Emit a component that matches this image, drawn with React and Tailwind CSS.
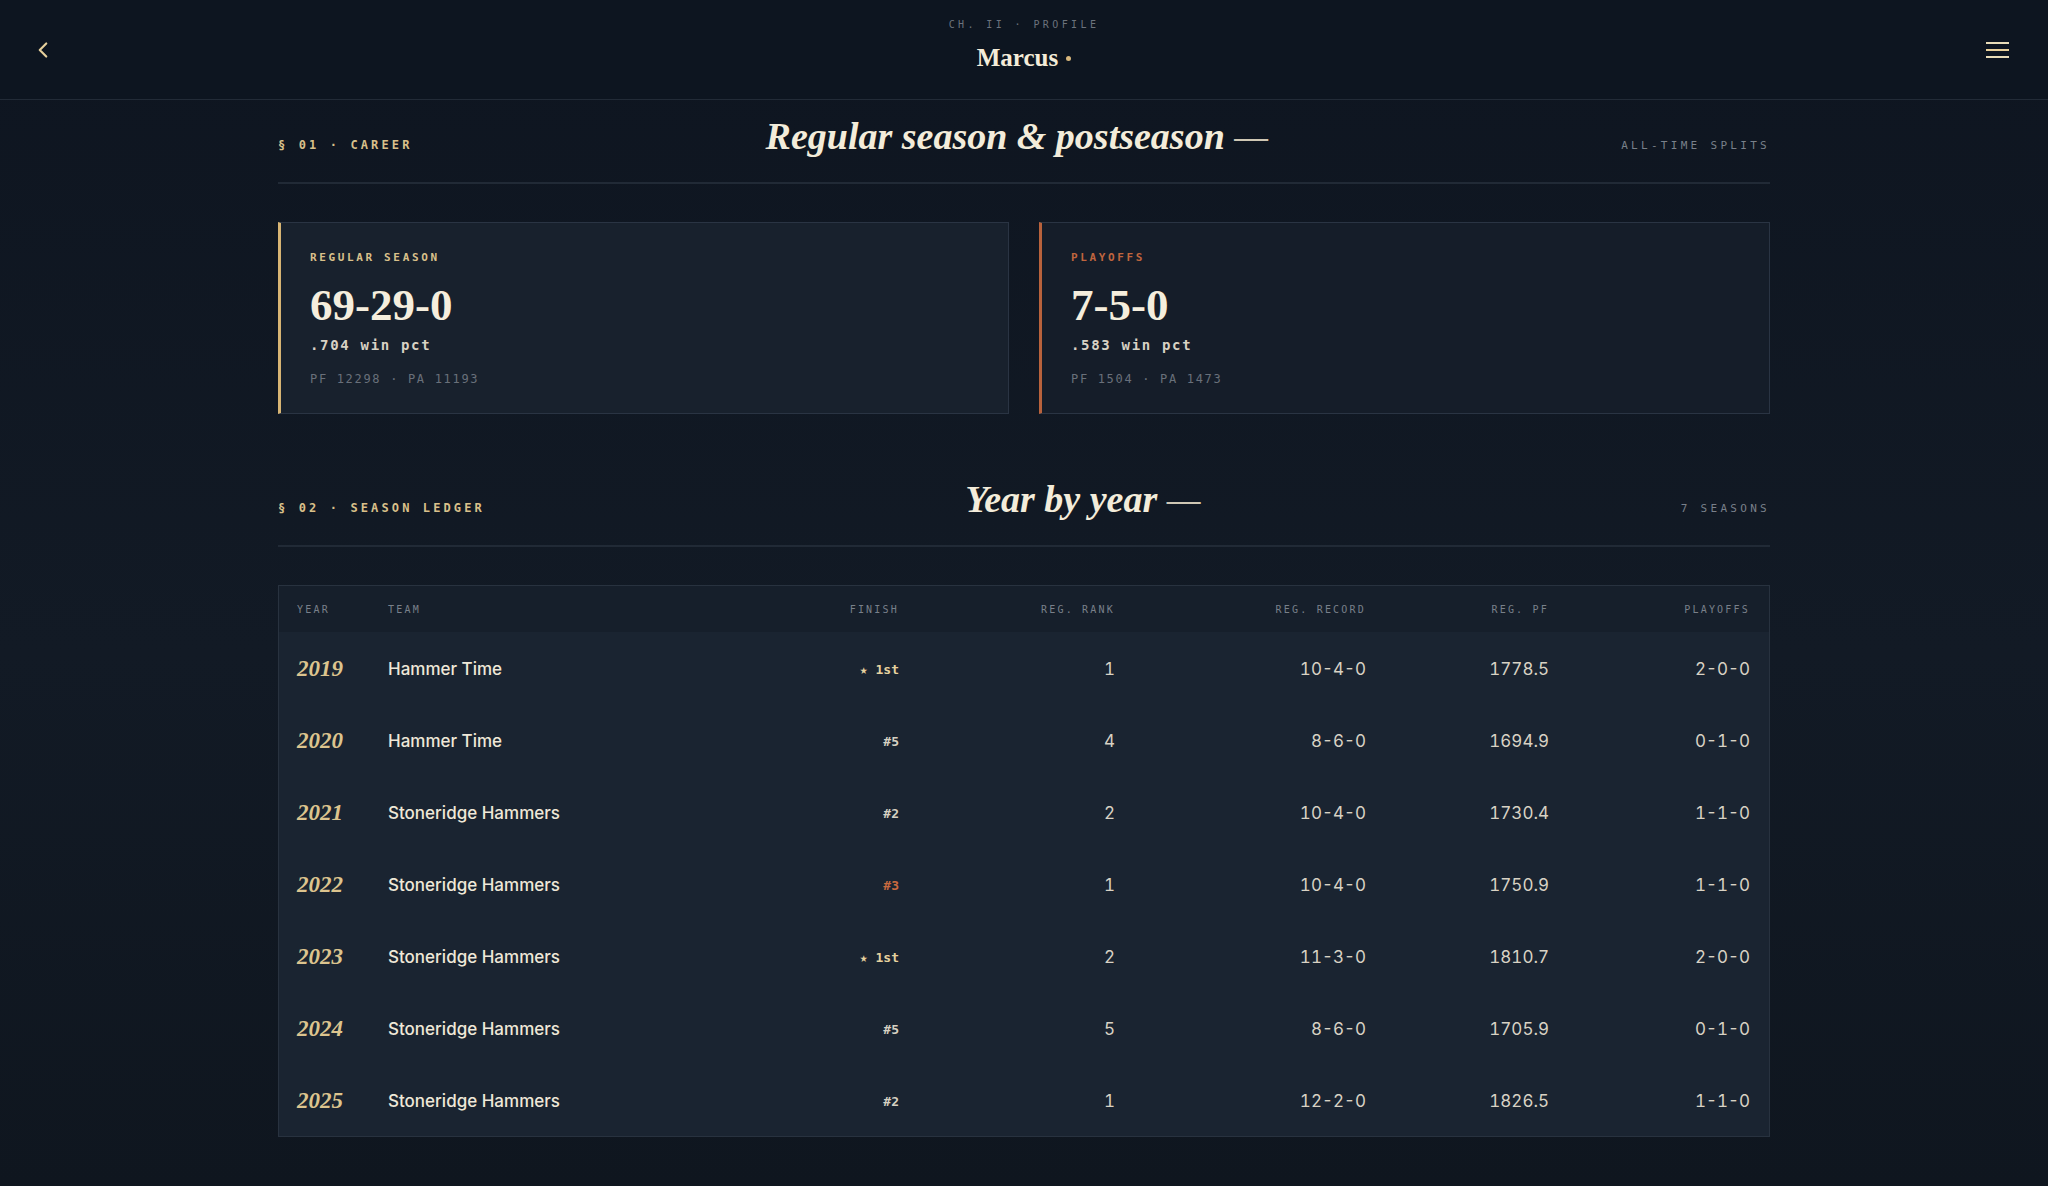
import { ChevronLeft } from 'lucide-react'

const seasons = [
  { year: '2019', team: 'Hammer Time', finish: '★ 1st', tone: 'gold', rank: '1', record: '10-4-0', pf: '1778.5', playoffs: '2-0-0' },
  { year: '2020', team: 'Hammer Time', finish: '#5', tone: 'plain', rank: '4', record: '8-6-0', pf: '1694.9', playoffs: '0-1-0' },
  { year: '2021', team: 'Stoneridge Hammers', finish: '#2', tone: 'plain', rank: '2', record: '10-4-0', pf: '1730.4', playoffs: '1-1-0' },
  { year: '2022', team: 'Stoneridge Hammers', finish: '#3', tone: 'bronze', rank: '1', record: '10-4-0', pf: '1750.9', playoffs: '1-1-0' },
  { year: '2023', team: 'Stoneridge Hammers', finish: '★ 1st', tone: 'gold', rank: '2', record: '11-3-0', pf: '1810.7', playoffs: '2-0-0' },
  { year: '2024', team: 'Stoneridge Hammers', finish: '#5', tone: 'plain', rank: '5', record: '8-6-0', pf: '1705.9', playoffs: '0-1-0' },
  { year: '2025', team: 'Stoneridge Hammers', finish: '#2', tone: 'plain', rank: '1', record: '12-2-0', pf: '1826.5', playoffs: '1-1-0' },
]

const mono = "font-['DejaVu_Sans_Mono',monospace]"
const serif = "font-['Liberation_Serif',serif]"
const sans = "font-['Inter',sans-serif]"

const cols = 'grid grid-cols-[109px_332px_179px_216px_251px_183px_201px] pr-[19px]'

const toneClass = {
  gold: 'text-[#e6d29f]',
  plain: 'text-[#d6d0c2]',
  bronze: 'text-[#c8693f]',
}

function SectionHead({ label, title, aside }) {
  return (
    <div className="flex items-baseline justify-between border-b-2 border-[#212a36] pb-[27px]">
      <span className={`${mono} text-[12px] font-bold tracking-[0.26em] text-[#d9c08a]`}>{label}</span>
      <h2 className={`${serif} text-[38px] leading-none italic font-bold text-[#f3ecda]`}>
        {title} <span className="font-normal text-[#cfc7b4]">—</span>
      </h2>
      <span className={`${mono} text-[11px] tracking-[0.3em] text-[#79808a]`}>{aside}</span>
    </div>
  )
}

function RecordCard({ label, labelColor, accent, record, pct, pf, pa, bg }) {
  return (
    <div className={`h-[192px] border border-[#2a3443] border-l-[3px] ${accent} ${bg} pl-[29px] pt-[28px]`}>
      <p className={`${mono} text-[11px] leading-[14px] font-bold tracking-[0.24em] ${labelColor}`}>{label}</p>
      <p className={`${serif} mt-[18px] text-[45px] leading-none font-bold text-[#f5eedd]`}>{record}</p>
      <p className={`${mono} mt-[7px] text-[14px] leading-[20px] font-bold tracking-[0.12em] text-[#d8d2c4]`}>{pct} win pct</p>
      <p className={`${mono} mt-4 text-[12px] leading-[16px] tracking-[0.14em] text-[#69707a]`}>
        PF {pf} · PA {pa}
      </p>
    </div>
  )
}

export default function App() {
  return (
    <div className="min-h-screen bg-[linear-gradient(180deg,#0e1520_0%,#121a25_55%,#0f161f_100%)]">
      <header className="grid h-[100px] grid-cols-[1fr_auto_1fr] items-center border-b border-[#222b37] bg-[#0d1520] px-[30px]">
        <button className="justify-self-start text-[#e6d09c]">
          <ChevronLeft size={26} strokeWidth={2} />
        </button>
        <div className="flex flex-col items-center self-start pt-[18px]">
          <span className={`${mono} text-[10px] leading-[14px] tracking-[0.34em] text-[#6c737d]`}>CH. II · PROFILE</span>
          <span className={`${serif} mt-[11px] flex items-center gap-[8px] text-[25px] leading-[30px] font-bold text-[#f4ecd9]`}>
            Marcus <span className="inline-block h-[5px] w-[5px] rounded-full bg-[#d8b77c]" />
          </span>
        </div>
        <button className="flex flex-col gap-[5px] justify-self-end pr-[9px]">
          <span className="block h-[2px] w-[23px] bg-[#e9dcb8]" />
          <span className="block h-[2px] w-[23px] bg-[#e9d09a]" />
          <span className="block h-[2px] w-[23px] bg-[#e9dcb8]" />
        </button>
      </header>

      <main className="mx-auto w-[1492px] pt-[17px] pb-[50px]">
        <SectionHead label="§ 01 · CAREER" title="Regular season & postseason" aside="ALL-TIME SPLITS" />

        <div className="mt-[38px] grid grid-cols-2 gap-[30px]">
          <RecordCard
            label="REGULAR SEASON"
            labelColor="text-[#d9c08a]"
            accent="border-l-[#d8b574]"
            bg="bg-[#18212d]"
            record="69-29-0"
            pct=".704"
            pf="12298"
            pa="11193"
          />
          <RecordCard
            label="PLAYOFFS"
            labelColor="text-[#c0653e]"
            accent="border-l-[#b8623c]"
            bg="bg-[#151d29]"
            record="7-5-0"
            pct=".583"
            pf="1504"
            pa="1473"
          />
        </div>

        <div className="mt-[66px]">
          <SectionHead label="§ 02 · SEASON LEDGER" title="Year by year" aside="7 SEASONS" />
        </div>

        <div className="mt-[38px] border border-[#28323f] bg-[#1a2431]">
          <div className={`${cols} ${mono} h-[46px] items-center bg-[#161f2b] text-[10px] tracking-[0.22em] text-[#79808a]`}>
            <span className="pl-[18px]">YEAR</span>
            <span>TEAM</span>
            <span className="text-right">FINISH</span>
            <span className="text-right">REG. RANK</span>
            <span className="text-right">REG. RECORD</span>
            <span className="text-right">REG. PF</span>
            <span className="text-right">PLAYOFFS</span>
          </div>
          {seasons.map((s) => (
            <div key={s.year} className={`${cols} h-[72px] items-center pt-[3px]`}>
              <span className={`${serif} pl-[18px] text-[23px] italic font-bold text-[#dcc48e]`}>{s.year}</span>
              <span className={`${sans} text-[17px] font-medium text-[#efe8d8]`}>{s.team}</span>
              <span className={`${mono} text-right text-[13px] font-bold ${toneClass[s.tone]}`}>{s.finish}</span>
              <span className={`${sans} text-right text-[17px] tabular-nums text-[#d8d2c4]`}>{s.rank}</span>
              <span className={`${sans} text-right text-[17px] tabular-nums text-[#d8d2c4]`}>{s.record}</span>
              <span className={`${sans} text-right text-[17px] tabular-nums text-[#d8d2c4]`}>{s.pf}</span>
              <span className={`${sans} text-right text-[17px] tabular-nums text-[#d8d2c4]`}>{s.playoffs}</span>
            </div>
          ))}
        </div>
      </main>
    </div>
  )
}
